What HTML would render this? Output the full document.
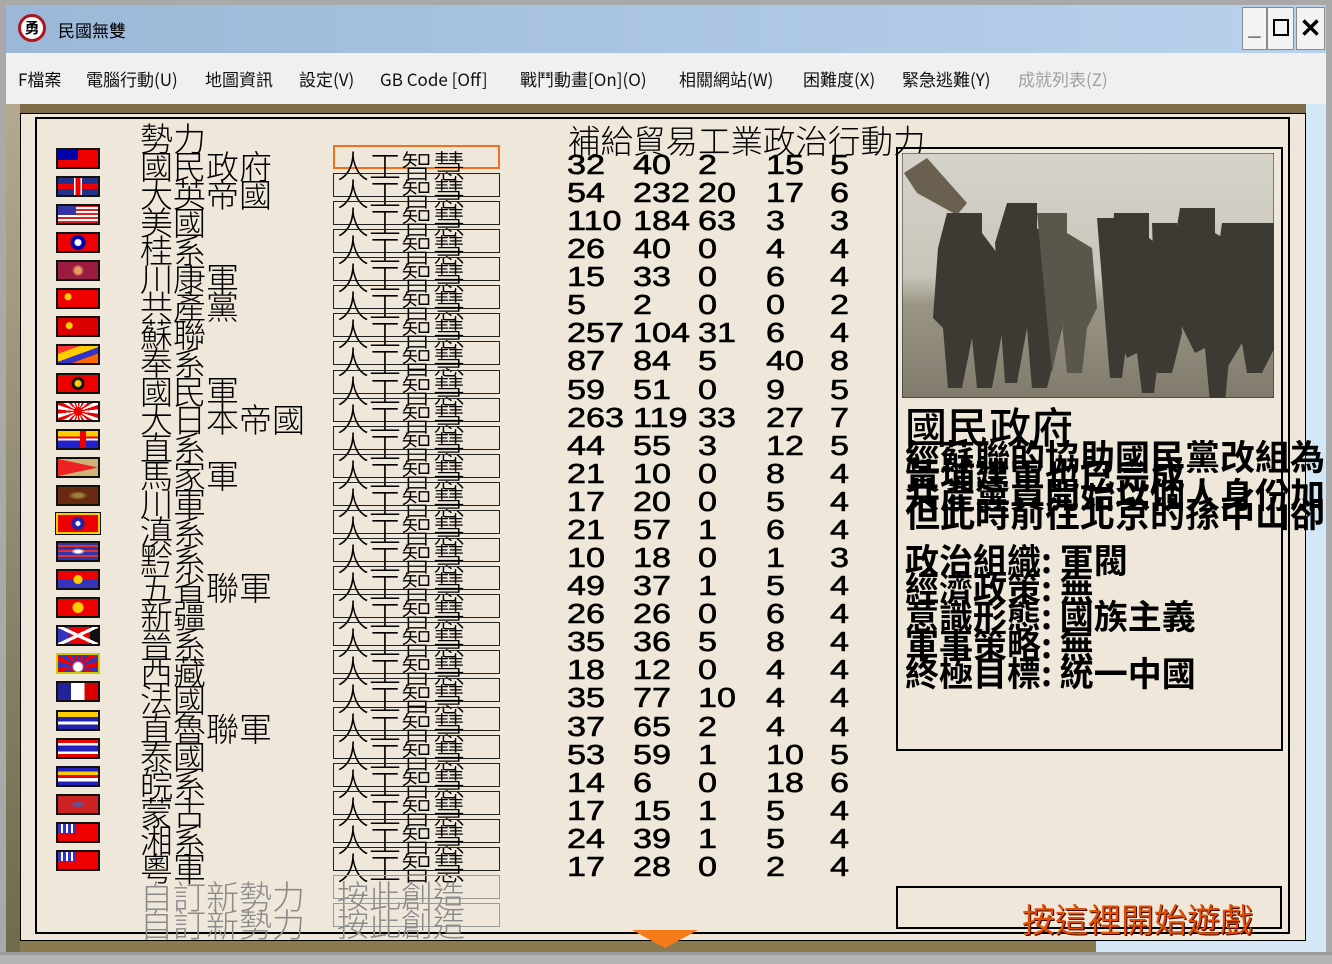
<!DOCTYPE html>
<html><head><meta charset="utf-8">
<style>
*{margin:0;padding:0;box-sizing:border-box}
html,body{width:1332px;height:964px;overflow:hidden;background:#a9a9a9;font-family:"Liberation Sans","Noto Sans CJK TC",sans-serif}
.abs{position:absolute}
#title{left:6px;top:5px;width:1320px;height:48px;background:linear-gradient(90deg,#9cb8d8,#b9d2ec)}
#menu{left:6px;top:53px;width:1320px;height:51px;background:#f0f0f0;font-size:17px;color:#111;font-family:"Noto Sans CJK TC","Liberation Sans",sans-serif}
#menu span{position:absolute;top:13px;white-space:nowrap}
.btn{top:7px;height:43px;background:#f3f3f3;border:1px solid #8a8a8a;font-size:22px;text-align:center;line-height:40px;color:#000}
#client{left:6px;top:104px;width:1320px;height:848px;background:linear-gradient(180deg,#7e6b48,#8c8159 40%,#7d7a52 70%,#8b7a4f);overflow:hidden}
#panel{left:20px;top:113px;width:1286px;height:828px;background:#efe8da;border:1px solid #000}
#inner{left:35px;top:117px;width:1255px;height:817px;border:2px solid #000}
.cj{font-family:"Noto Sans CJK TC","WenQuanYi Zen Hei",sans-serif;font-weight:300;color:#000;white-space:nowrap}
.r{position:absolute;left:0;width:900px;height:28px}
.f{position:absolute;left:56px;top:-3px;width:44px;height:21px;border:2px solid #111}
.n{position:absolute;left:140px;top:0;font-size:33px;line-height:28px}
.b{position:absolute;left:333px;top:-6px;width:167px;height:24px;border:1px solid #222}
.bt{position:absolute;left:337px;top:0;font-size:32px;line-height:28px}
.d{position:absolute;top:0;font-size:28px;line-height:28px;color:#000;font-family:"Liberation Sans",sans-serif;transform:scaleX(1.22);transform-origin:0 0;-webkit-text-stroke:0.6px #000}
.d1{left:567px}.d2{left:633px}.d3{left:698px}.d4{left:766px}.d5{left:830px}
.g{color:#8a8a8a}
.info{font-family:"Noto Sans CJK TC","WenQuanYi Zen Hei",sans-serif;font-weight:500;white-space:nowrap;color:#000;position:absolute;left:905px}
</style></head><body>
<div class="abs" id="title">
 <div class="abs" style="left:12px;top:9px;width:28px;height:28px;border-radius:50%;border:3px solid #b0141c;background:#fff;font-size:15px;line-height:22px;text-align:center;font-family:'Noto Sans CJK TC',sans-serif;font-weight:700">勇</div>
 <div class="abs" style="left:52px;top:12px;font-size:17px;font-family:'Noto Sans CJK TC',sans-serif">民國無雙</div>
</div>
<div class="abs btn" style="left:1242px;width:25px;font-weight:700">_</div>
<div class="abs btn" style="left:1267px;width:27px"><div style="margin:11px auto 0;width:16px;height:17px;border:2px solid #000"></div></div>
<div class="abs btn" style="left:1296px;width:29px;font-weight:700;font-size:26px">✕</div>
<div class="abs" id="menu">
<span style="left:12px">F檔案</span><span style="left:80px">電腦行動(U)</span><span style="left:199px">地圖資訊</span><span style="left:293px">設定(V)</span><span style="left:374px">GB Code [Off]</span><span style="left:514px">戰鬥動畫[On](O)</span><span style="left:673px">相關網站(W)</span><span style="left:797px">困難度(X)</span><span style="left:896px">緊急逃難(Y)</span><span style="left:1012px;color:#a0a0a0">成就列表(Z)</span>
</div>
<div class="abs" id="client">
 <div class="abs" style="left:1090px;top:820px;width:240px;height:40px;background:#d4e7f7"></div>
 <div class="abs" style="left:1300px;top:0;width:30px;height:848px;background:#d4e7f7"></div>
 <div class="abs" style="left:0;top:0;width:14px;height:848px;background:linear-gradient(180deg,#b5a88e,#8f8a70,#6f6b4c)"></div>
</div>
<div class="abs" style="left:0;top:952px;width:1332px;height:12px;background:#b4b4b4;border-top:3px solid #9a9a9a"></div>
<div class="abs" id="panel"></div>
<div class="abs" id="inner"></div>

<div class="abs" style="left:0;top:0;width:1332px;height:964px">
<div class="r" style="top:123px"><div class="n cj">勢力</div><div class="cj" style="position:absolute;left:568px;top:3px;font-size:32.5px;line-height:28px">補給貿易工業政治行動力</div></div>

<div class="r" style="top:151px"><div class="f" style="background:#e00">
<div style="width:20px;height:10px;background:#00a"></div></div><div class="n cj">國民政府</div><div class="b" style="border:2px solid #f07020"></div><div class="bt cj">人工智慧</div><span class="d d1">32</span><span class="d d2">40</span><span class="d d3">2</span><span class="d d4">15</span><span class="d d5">5</span></div>
<div class="r" style="top:179px"><div class="f" style="background:linear-gradient(90deg,transparent 40%,#fff 40%,#fff 44%,#e00 44%,#e00 56%,#fff 56%,#fff 60%,transparent 60%),linear-gradient(0deg,transparent 35%,#e00 35%,#e00 65%,transparent 65%),#23308a"></div><div class="n cj">大英帝國</div><div class="b"></div><div class="bt cj">人工智慧</div><span class="d d1">54</span><span class="d d2">232</span><span class="d d3">20</span><span class="d d4">17</span><span class="d d5">6</span></div>
<div class="r" style="top:207px"><div class="f" style="background:repeating-linear-gradient(0deg,#d22 0 2px,#fff 2px 4px)"><div style="width:18px;height:9px;background:#33a"></div></div><div class="n cj">美國</div><div class="b"></div><div class="bt cj">人工智慧</div><span class="d d1">110</span><span class="d d2">184</span><span class="d d3">63</span><span class="d d4">3</span><span class="d d5">3</span></div>
<div class="r" style="top:235px"><div class="f" style="background:radial-gradient(circle,#fff 3px,#00a 4px,#00a 7px,transparent 8px),#e00"></div><div class="n cj">桂系</div><div class="b"></div><div class="bt cj">人工智慧</div><span class="d d1">26</span><span class="d d2">40</span><span class="d d3">0</span><span class="d d4">4</span><span class="d d5">4</span></div>
<div class="r" style="top:263px"><div class="f" style="background:radial-gradient(circle,#e8a060 3px,#9a1c40 6px)"></div><div class="n cj">川康軍</div><div class="b"></div><div class="bt cj">人工智慧</div><span class="d d1">15</span><span class="d d2">33</span><span class="d d3">0</span><span class="d d4">6</span><span class="d d5">4</span></div>
<div class="r" style="top:291px"><div class="f" style="background:radial-gradient(circle at 25% 40%,#fc0 3px,#e00 4px)"></div><div class="n cj">共產黨</div><div class="b"></div><div class="bt cj">人工智慧</div><span class="d d1">5</span><span class="d d2">2</span><span class="d d3">0</span><span class="d d4">0</span><span class="d d5">2</span></div>
<div class="r" style="top:319px"><div class="f" style="background:radial-gradient(circle at 28% 45%,#fc0 3px,#d00 4px)"></div><div class="n cj">蘇聯</div><div class="b"></div><div class="bt cj">人工智慧</div><span class="d d1">257</span><span class="d d2">104</span><span class="d d3">31</span><span class="d d4">6</span><span class="d d5">4</span></div>
<div class="r" style="top:347px"><div class="f" style="background:linear-gradient(160deg,#f33 25%,#fc0 25%,#fc0 50%,#33c 50%,#33c 70%,#f60 70%)"></div><div class="n cj">奉系</div><div class="b"></div><div class="bt cj">人工智慧</div><span class="d d1">87</span><span class="d d2">84</span><span class="d d3">5</span><span class="d d4">40</span><span class="d d5">8</span></div>
<div class="r" style="top:376px"><div class="f" style="background:radial-gradient(circle,#fc0 3px,#111 4px,#111 6px,#e00 7px)"></div><div class="n cj">國民軍</div><div class="b"></div><div class="bt cj">人工智慧</div><span class="d d1">59</span><span class="d d2">51</span><span class="d d3">0</span><span class="d d4">9</span><span class="d d5">5</span></div>
<div class="r" style="top:404px"><div class="f" style="background:radial-gradient(circle,#e00 4px,transparent 5px),repeating-conic-gradient(#e00 0 12deg,#fff 12deg 24deg)"></div><div class="n cj">大日本帝國</div><div class="b"></div><div class="bt cj">人工智慧</div><span class="d d1">263</span><span class="d d2">119</span><span class="d d3">33</span><span class="d d4">27</span><span class="d d5">7</span></div>
<div class="r" style="top:432px"><div class="f" style="background:linear-gradient(90deg,transparent 55%,#e00 55%,#e00 70%,transparent 70%),linear-gradient(180deg,#fc0 0 33%,#e00 33% 45%,#fff 45% 55%,#22c 55% 100%)"></div><div class="n cj">直系</div><div class="b"></div><div class="bt cj">人工智慧</div><span class="d d1">44</span><span class="d d2">55</span><span class="d d3">3</span><span class="d d4">12</span><span class="d d5">5</span></div>
<div class="r" style="top:460px"><div class="f" style="background:#cdb27a"><div style="width:40px;height:17px;background:#e22;clip-path:polygon(0 0,100% 50%,0 100%)"></div></div><div class="n cj">馬家軍</div><div class="b"></div><div class="bt cj">人工智慧</div><span class="d d1">21</span><span class="d d2">10</span><span class="d d3">0</span><span class="d d4">8</span><span class="d d5">4</span></div>
<div class="r" style="top:488px"><div class="f" style="background:radial-gradient(ellipse,#a08040 4px,#6a2a10 10px)"></div><div class="n cj">川軍</div><div class="b"></div><div class="bt cj">人工智慧</div><span class="d d1">17</span><span class="d d2">20</span><span class="d d3">0</span><span class="d d4">5</span><span class="d d5">4</span></div>
<div class="r" style="top:516px"><div class="f" style="background:radial-gradient(circle,#fff 2px,#22a 3px,#22a 6px,#e00 7px);border:2px solid #fc0;outline:1px solid #111"></div><div class="n cj">滇系</div><div class="b"></div><div class="bt cj">人工智慧</div><span class="d d1">21</span><span class="d d2">57</span><span class="d d3">1</span><span class="d d4">6</span><span class="d d5">4</span></div>
<div class="r" style="top:544px"><div class="f" style="background:radial-gradient(ellipse,#fff 3px,transparent 7px),repeating-linear-gradient(0deg,#33a 0 3px,#d33 3px 5px)"></div><div class="n cj">黔系</div><div class="b"></div><div class="bt cj">人工智慧</div><span class="d d1">10</span><span class="d d2">18</span><span class="d d3">0</span><span class="d d4">1</span><span class="d d5">3</span></div>
<div class="r" style="top:572px"><div class="f" style="background:radial-gradient(circle,#fc0 4px,transparent 5px),linear-gradient(180deg,#e00 50%,#33b 50%)"></div><div class="n cj">五省聯軍</div><div class="b"></div><div class="bt cj">人工智慧</div><span class="d d1">49</span><span class="d d2">37</span><span class="d d3">1</span><span class="d d4">5</span><span class="d d5">4</span></div>
<div class="r" style="top:600px"><div class="f" style="background:radial-gradient(circle,#fc0 5px,#e00 6px)"></div><div class="n cj">新疆</div><div class="b"></div><div class="bt cj">人工智慧</div><span class="d d1">26</span><span class="d d2">26</span><span class="d d3">0</span><span class="d d4">6</span><span class="d d5">4</span></div>
<div class="r" style="top:628px"><div class="f" style="background:linear-gradient(25deg,transparent 45%,#fff 45%,#fff 55%,transparent 55%),linear-gradient(-25deg,transparent 45%,#fff 45%,#fff 55%,transparent 55%),linear-gradient(90deg,#33b 30%,#e00 30% 80%,#111 80%);"></div><div class="n cj">晉系</div><div class="b"></div><div class="bt cj">人工智慧</div><span class="d d1">35</span><span class="d d2">36</span><span class="d d3">5</span><span class="d d4">8</span><span class="d d5">4</span></div>
<div class="r" style="top:656px"><div class="f" style="background:radial-gradient(circle at 50% 70%,#fff 4px,transparent 6px),repeating-conic-gradient(from 0deg at 50% 70%,#33b 0 15deg,#e00 15deg 30deg);border-color:#cc0"></div><div class="n cj">西藏</div><div class="b"></div><div class="bt cj">人工智慧</div><span class="d d1">18</span><span class="d d2">12</span><span class="d d3">0</span><span class="d d4">4</span><span class="d d5">4</span></div>
<div class="r" style="top:684px"><div class="f" style="background:linear-gradient(90deg,#229 33%,#fff 33% 66%,#d00 66%)"></div><div class="n cj">法國</div><div class="b"></div><div class="bt cj">人工智慧</div><span class="d d1">35</span><span class="d d2">77</span><span class="d d3">10</span><span class="d d4">4</span><span class="d d5">4</span></div>
<div class="r" style="top:713px"><div class="f" style="background:linear-gradient(180deg,#fc0 0 30%,#22a 30% 55%,#fff 55% 75%,#22a 75%)"></div><div class="n cj">直魯聯軍</div><div class="b"></div><div class="bt cj">人工智慧</div><span class="d d1">37</span><span class="d d2">65</span><span class="d d3">2</span><span class="d d4">4</span><span class="d d5">4</span></div>
<div class="r" style="top:741px"><div class="f" style="background:linear-gradient(180deg,#e00 0 17%,#fff 17% 33%,#22b 33% 67%,#fff 67% 83%,#e00 83%)"></div><div class="n cj">泰國</div><div class="b"></div><div class="bt cj">人工智慧</div><span class="d d1">53</span><span class="d d2">59</span><span class="d d3">1</span><span class="d d4">10</span><span class="d d5">5</span></div>
<div class="r" style="top:769px"><div class="f" style="background:linear-gradient(180deg,#22b 0 20%,#fc0 20% 40%,#e00 40% 60%,#fff 60% 80%,#22b 80%)"></div><div class="n cj">皖系</div><div class="b"></div><div class="bt cj">人工智慧</div><span class="d d1">14</span><span class="d d2">6</span><span class="d d3">0</span><span class="d d4">18</span><span class="d d5">6</span></div>
<div class="r" style="top:797px"><div class="f" style="background:radial-gradient(ellipse,#55a 3px,#c22 8px)"></div><div class="n cj">蒙古</div><div class="b"></div><div class="bt cj">人工智慧</div><span class="d d1">17</span><span class="d d2">15</span><span class="d d3">1</span><span class="d d4">5</span><span class="d d5">4</span></div>
<div class="r" style="top:825px"><div class="f" style="background:#e00"><div style="width:18px;height:9px;background:repeating-linear-gradient(90deg,#33c 0 3px,#fff 3px 5px)"></div></div><div class="n cj">湘系</div><div class="b"></div><div class="bt cj">人工智慧</div><span class="d d1">24</span><span class="d d2">39</span><span class="d d3">1</span><span class="d d4">5</span><span class="d d5">4</span></div>
<div class="r" style="top:853px"><div class="f" style="background:#e00"><div style="width:18px;height:9px;background:repeating-linear-gradient(90deg,#33c 0 3px,#fff 3px 5px)"></div></div><div class="n cj">粵軍</div><div class="b"></div><div class="bt cj">人工智慧</div><span class="d d1">17</span><span class="d d2">28</span><span class="d d3">0</span><span class="d d4">2</span><span class="d d5">4</span></div>
<div class="r" style="top:881px"><div class="n cj g">自訂新勢力</div><div class="b" style="border-color:#999"></div><div class="bt cj g">按此創造</div></div>
<div class="r" style="top:909px"><div class="n cj g">自訂新勢力</div><div class="b" style="border-color:#999"></div><div class="bt cj g">按此創造</div></div>
</div>

<!-- picture box -->
<div class="abs" style="left:896px;top:147px;width:387px;height:604px;border:2px solid #000"></div>
<svg class="abs" style="left:902px;top:153px" width="372" height="245" viewBox="0 0 372 245">
<defs><linearGradient id="sk" x1="0" y1="0" x2="0" y2="1"><stop offset="0" stop-color="#d6d3cb"/><stop offset="0.5" stop-color="#c9c5ba"/><stop offset="0.62" stop-color="#9a9585"/><stop offset="1" stop-color="#7f7a6b"/></linearGradient></defs>
<rect width="372" height="245" fill="url(#sk)" stroke="#222"/>
<path d="M2 20 L25 5 L65 50 L55 62 L15 40 Z" fill="#6a6050"/>
<g fill="#3d3a33">
<path d="M45 60 h35 v20 l15 20 l5 80 l-10 55 h-15 l-5-50 l-10 50 h-14 l-5-60 l-10-10 l5-70 z"/>
<path d="M105 50 h30 v25 l20 20 l5 80 l-15 60 h-15 l-5-60 l-10 55 h-12 l-5-70 l-5-70 z"/>
<path d="M135 60 h30 v20 l25 15 l5 60 l-10 20 l-5 45 h-15 l-5-50 l-10 50 z" fill="#5a564c"/>
<path d="M195 65 h25 v20 l15 15 l0 70 l-10 15 l-5 40 h-12 l-5-60 z"/>
<path d="M212 60 h35 v25 l20 15 l5 75 l-15 25 l-5 40 h-12 l-5-40 l-10 5 l-15-40 l0-75 z"/>
<path d="M250 70 h25 v20 l5 90 l-10 40 h-15 z"/>
<path d="M278 55 h35 v25 l25 15 l5 75 l-15 25 l-5 55 h-15 l-5-55 l-10 5 l-20-40 l0-75 z"/>
<path d="M320 70 h55 v120 l-15 30 h-15 l-5-30 l-15 25 h-12 l-5-60 z"/>
</g>
</svg>
<div class="info" style="top:400px;font-size:42px;line-height:52px">國民政府</div>
<div class="abs" style="left:900px;top:440px;width:426px;height:110px;overflow:hidden">
<div class="info" style="left:5px;top:6px;font-size:35px;line-height:19px;font-weight:700">經蘇聯的協助國民黨改組為革命政黨<br>黃埔建軍也已完成<br>共產黨員開始以個人身份加入國民黨<br>但此時前往北京的孫中山卻病逝</div>
</div>
<div class="info" style="top:545px;font-size:34px;line-height:28.2px;font-weight:700">政治組織: 軍閥<br>經濟政策: 無<br>意識形態: 國族主義<br>軍事策略: 無<br>終極目標: 統一中國</div>

<div class="abs" style="left:896px;top:886px;width:386px;height:43px;border:2px solid #000"></div>
<div class="abs cj" style="left:1022px;top:898px;font-size:33px;line-height:40px;color:#e05000;font-weight:400;text-shadow:1px 1px 0 #400">按這裡開始遊戲</div>
<div class="abs" style="left:632px;top:930px;width:66px;height:18px;background:#f57a1a;clip-path:polygon(0 0,100% 0,50% 100%)"></div>
</body></html>
